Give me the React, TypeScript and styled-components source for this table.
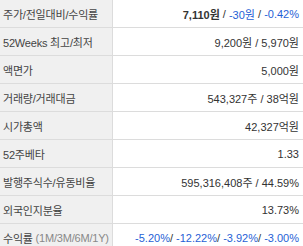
import React from 'react';
import styled, { createGlobalStyle } from 'styled-components';

const GlobalStyle = createGlobalStyle`
  html, body {
    margin: 0;
    padding: 0;
    background: #fff;
  }
  body {
    font-family: "Liberation Sans", "Noto Sans CJK KR", sans-serif;
    font-size: 11px;
    color: #333;
  }
`;

type Part = { text: string; tone?: 'blue' | 'bold' };

const rows: { label: string; sub?: string; values: Part[] }[] = [
  {
    label: '주가/전일대비/수익률',
    values: [
      { text: '7,110원', tone: 'bold' },
      { text: ' / ' },
      { text: '-30원', tone: 'blue' },
      { text: ' / ' },
      { text: '-0.42%', tone: 'blue' },
    ],
  },
  { label: '52Weeks 최고/최저', values: [{ text: '9,200원 / 5,970원' }] },
  { label: '액면가', values: [{ text: '5,000원' }] },
  { label: '거래량/거래대금', values: [{ text: '543,327주 / 38억원' }] },
  { label: '시가총액', values: [{ text: '42,327억원' }] },
  { label: '52주베타', values: [{ text: '1.33' }] },
  { label: '발행주식수/유동비율', values: [{ text: '595,316,408주 / 44.59%' }] },
  { label: '외국인지분율', values: [{ text: '13.73%' }] },
  {
    label: '수익률',
    sub: ' (1M/3M/6M/1Y)',
    values: [
      { text: '-5.20%', tone: 'blue' },
      { text: '/ ' },
      { text: '-12.22%', tone: 'blue' },
      { text: '/ ' },
      { text: '-3.92%', tone: 'blue' },
      { text: '/ ' },
      { text: '-3.00%', tone: 'blue' },
    ],
  },
];

const App: React.FC = () => {
  return (
    <>
      <GlobalStyle />
      <Table>
        {rows.map((row, i) => (
          <Row key={i} last={i === rows.length - 1}>
            <Label>
              {row.label}
              {row.sub && <Sub>{row.sub}</Sub>}
            </Label>
            <Value>
              {row.values.map((p, j) => (
                <Piece key={j} tone={p.tone}>
                  {p.text}
                </Piece>
              ))}
            </Value>
          </Row>
        ))}
      </Table>
    </>
  );
};

const Table = styled.div`
  display: flex;
  flex-direction: column;
  width: 303px;
`;

const Row = styled.div<{ last?: boolean }>`
  display: grid;
  grid-template-columns: 113px 1fr;
  height: 27px;
  border-bottom: ${(p) => (p.last ? 'none' : '1px solid #dcdcdc')};
`;

const Label = styled.div`
  display: flex;
  align-items: center;
  padding-left: 3px;
  background: #f0f0f0;
  border-right: 1px solid #dcdcdc;
  color: #444;
  white-space: nowrap;
  letter-spacing: -0.2px;
`;

const Sub = styled.span`
  color: #888;
  white-space: pre;
`;

const Value = styled.div`
  display: flex;
  align-items: center;
  justify-content: flex-end;
  padding-right: 4px;
  white-space: pre;
  color: #333;
`;

const Piece = styled.span<{ tone?: 'blue' | 'bold' }>`
  color: ${(p) => (p.tone === 'blue' ? '#1f5fd6' : '#333')};
  font-weight: ${(p) => (p.tone === 'bold' ? 700 : 400)};
`;

export default App;
